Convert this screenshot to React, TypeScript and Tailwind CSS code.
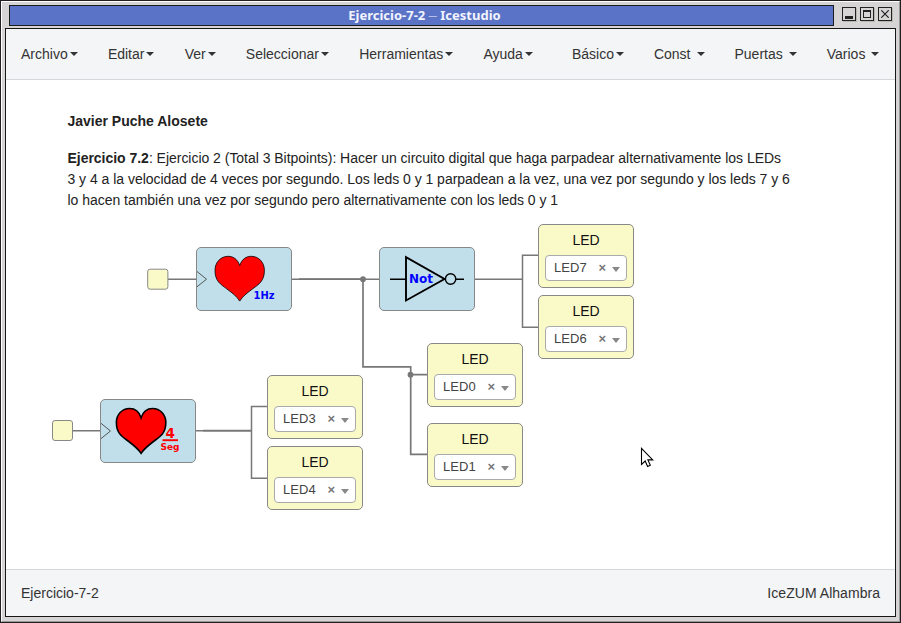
import React from "react";

const leftMenu = ["Archivo", "Editar", "Ver", "Seleccionar", "Herramientas", "Ayuda"];
const rightMenu = ["Básico", "Const", "Puertas", "Varios"];

function MenuItem({ label, spaced = false }: { label: string; spaced?: boolean }) {
  return (
    <div className="flex items-center whitespace-nowrap">
      <span>{label}</span>
      <span
        className={
          "h-0 w-0 border-x-4 border-t-4 border-x-transparent border-t-[#333333] " +
          (spaced ? "ml-[6px]" : "ml-[2px]")
        }
      />
    </div>
  );
}

function LedBlock({ name, place }: { name: string; place: string }) {
  return (
    <div
      className={
        "absolute flex h-16 w-24 flex-col items-center rounded-[5px] border border-[#888888] bg-[#fafac8] pt-[5px] " + place
      }
    >
      <div className="text-[14px] leading-5 text-[#111111]">LED</div>
      <div className="mt-[5px] flex h-[26px] w-[82px] items-center rounded-[4px] border border-[#aaaaaa] bg-white pl-2 text-[13px] text-[#444444]">
        <span className="w-[44.5px] leading-[24px] tracking-[0.1px]">{name}</span>
        <span className="w-[8px] text-[13px] font-bold leading-[24px] text-[#777777]">×</span>
        <span className="ml-[5.5px] mt-[3px] h-0 w-0 border-x-4 border-t-[5px] border-x-transparent border-t-[#888888]" />
      </div>
    </div>
  );
}

function Heart({ x, y, thick }: { x: number; y: number; thick: number }) {
  return (
    <path
      transform={`translate(${x} ${y})`}
      d="M0 9.3C2 3 6.5 0 11.5 0C19 0 24.7 6 24.7 14C24.7 25 19 28 13 32.5C7 37 3 40 0 44.8C-3 40-7 37-13 32.5C-19 28-24.7 25-24.7 14C-24.7 6-19 0-11.5 0C-6.5 0-2 3 0 9.3Z"
      fill="#ff0000"
      stroke="#000"
      strokeWidth={thick}
    />
  );
}

function Diagram() {
  return (
    <svg className="absolute inset-0 h-full w-full" viewBox="6 80 889 489">
      <g fill="none" stroke="#777777" strokeWidth="1.5">
        <path d="M168 279.2H196M292 279.2H379M475 279.2H522.5M538 255.3H522.5V327.2H538" />
        <path d="M299 279H363V366.8H410.7V454.4H427M410.7 374.7H427" strokeWidth="1.7" />
        <path d="M73 430.7H100M196 430.7H251.5M267 406.5H251.5V478.3H267" />
        <path d="M203 430.7H251.5" strokeWidth="1.8" />
      </g>
      <circle cx="363" cy="279.2" r="2.9" fill="#777777" />
      <circle cx="410.5" cy="374.7" r="2.9" fill="#777777" />

      <g stroke="#888888">
        <g fill="#fafac8">
          <rect x="147.7" y="269.2" width="20.2" height="20" rx="2.5" />
          <rect x="52.5" y="420.5" width="20" height="20" rx="2.5" />
        </g>
        <g fill="#c0dfeb">
          <rect x="196.5" y="247.5" width="95" height="63" rx="4.5" />
          <rect x="379.5" y="247.5" width="95" height="63" rx="4.5" />
          <rect x="100.5" y="399.5" width="95" height="63" rx="4.5" />
        </g>
      </g>
      <path d="M197 271.5L206.5 279.2L197 286.8M101 423.3L110.5 431L101 438.6" fill="none" stroke="#555555" />

      <Heart x={239.7} y={256.3} thick={0.8} />
      <Heart x={141.1} y={408.5} thick={1.6} />

      <g fontFamily="'DejaVu Sans', sans-serif" fontWeight="bold">
        <text x="253.5" y="299" fontSize="10" fill="#0000ff" textLength="21" lengthAdjust="spacingAndGlyphs">1Hz</text>
        <text x="165.4" y="438.3" fontSize="13.5" fill="#ff0000">4</text>
        <text x="160.5" y="450" fontSize="8.7" fill="#ff0000" textLength="19" lengthAdjust="spacingAndGlyphs">Seg</text>
      </g>
      <path d="M162.5 440.2H178" stroke="#ff0000" strokeWidth="1.9" />

      <g fill="none" stroke="#000">
        <path d="M390 279.2H406M456 279.2H464" strokeWidth="1.4" />
        <path d="M406 257.2V300.5L444.5 279Z" strokeWidth="1.9" />
        <circle cx="450.6" cy="279" r="5.2" strokeWidth="1.4" />
      </g>
      <text x="409" y="283" fontFamily="'DejaVu Sans', sans-serif" fontWeight="bold" fontSize="12" fill="#0000ff" textLength="24" lengthAdjust="spacingAndGlyphs">Not</text>

      <path
        d="M641.5 448.3V464.4L645.2 461L647.6 466.4L650.3 465.2L647.9 459.9H652.7Z"
        fill="#fff"
        stroke="#000"
        strokeWidth="1.1"
      />
    </svg>
  );
}

export default function App() {
  return (
    <div className="flex h-[623px] w-[901px] flex-col overflow-hidden border border-[#231f20] bg-[#d6d4d5] font-['Liberation_Sans',Arial,sans-serif]">
      <div className="flex min-h-0 flex-1 flex-col border border-b-[#999999] border-l-white border-r-[#999999] border-t-white px-[3px] pb-1 pt-[3px]">
        <header className="flex h-[23px] shrink-0 pl-1">
          <div className="flex h-[21px] w-[825px] items-center justify-center border border-[#1c1c1c] bg-[#5a73c6] pl-[6px] font-['Noto_Sans',sans-serif] text-[13px] font-bold text-[#f2f4ff]">
            <span className="flex items-center gap-[3px] whitespace-nowrap">
              <span>Ejercicio-7-2</span>
              <span className="text-[9px] font-normal">—</span>
              <span>Icestudio</span>
            </span>
          </div>
          <div className="ml-2 mt-[2px] flex gap-1">
            <span className="flex h-[14px] w-[14px] items-end justify-center border border-[#222222] pb-[1px] shadow-[1px_1px_0_#b5b9b2]">
              <span className="h-[3px] w-2 bg-[#222222]" />
            </span>
            <span className="flex h-[14px] w-[14px] items-center justify-center border border-[#222222] shadow-[1px_1px_0_#b5b9b2]">
              <span className="h-2 w-2 border border-t-2 border-[#222222]" />
            </span>
            <span className="flex h-[14px] w-[14px] items-center justify-center border border-[#222222] shadow-[1px_1px_0_#b5b9b2]">
              <svg className="h-2 w-2" viewBox="0 0 8 8">
                <path d="M0.3 0.3L7.7 7.7M7.7 0.3L0.3 7.7" stroke="#222" strokeWidth="1.2" />
              </svg>
            </span>
          </div>
        </header>

        <div className="flex min-h-0 w-[891px] flex-1 flex-col border border-[#161616] bg-white">
          <nav className="flex h-[51px] shrink-0 items-center justify-between border-b border-[#d5d8da] bg-[#f4f5f7] px-[15px] text-[14px] leading-5 text-[#333333]">
            <div className="flex gap-[30.2px]">
              {leftMenu.map((label) => <MenuItem key={label} label={label} />)}
            </div>
            <div className="flex gap-[30px] pr-[0.6px]">
              {rightMenu.map((label) => <MenuItem key={label} label={label} spaced={label !== "Básico"} />)}
            </div>
          </nav>

          <main className="relative h-[489px] shrink-0">
            <div className="pl-[61.5px] pt-[31px] text-[14px] leading-[21px] text-[#222222]">
              <p className="font-bold">Javier Puche Alosete</p>
              <p className="mt-4 whitespace-nowrap tracking-[-0.027px]">
                <b>Ejercicio 7.2</b>: Ejercicio 2 (Total 3 Bitpoints): Hacer un circuito digital que haga parpadear alternativamente los LEDs
                <br />
                3 y 4 a la velocidad de 4 veces por segundo. Los leds 0 y 1 parpadean a la vez, una vez por segundo y los leds 7 y 6
                <br />
                lo hacen también una vez por segundo pero alternativamente con los leds 0 y 1
              </p>
            </div>
            <Diagram />
            <LedBlock name="LED7" place="left-[532px] top-[144px]" />
            <LedBlock name="LED6" place="left-[532px] top-[215px]" />
            <LedBlock name="LED0" place="left-[421px] top-[263px]" />
            <LedBlock name="LED1" place="left-[421px] top-[343px]" />
            <LedBlock name="LED3" place="left-[261px] top-[295px]" />
            <LedBlock name="LED4" place="left-[261px] top-[366px]" />
          </main>

          <footer className="flex min-h-0 flex-1 items-center justify-between border-t border-[#d5d8da] bg-[#f4f5f7] px-[15px] text-[14px] text-[#333333]">
            <span>Ejercicio-7-2</span>
            <span className="tracking-[0.04px]">IceZUM Alhambra</span>
          </footer>
        </div>
      </div>
    </div>
  );
}
